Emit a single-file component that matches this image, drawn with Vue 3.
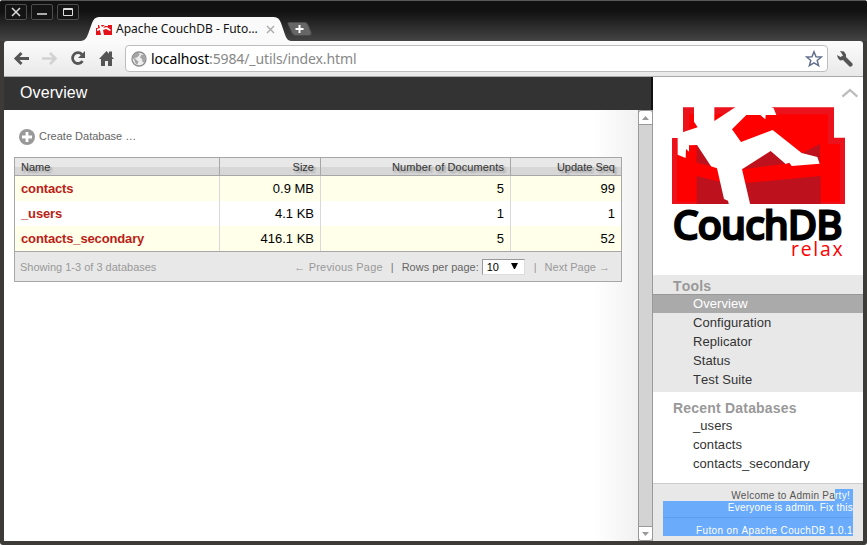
<script setup>
const databases = [
  { name: 'contacts', size: '0.9 MB', docs: 5, seq: 99 },
  { name: '_users', size: '4.1 KB', docs: 1, seq: 1 },
  { name: 'contacts_secondary', size: '416.1 KB', docs: 5, seq: 52 },
]
const tools = ['Overview', 'Configuration', 'Replicator', 'Status', 'Test Suite']
const recent = ['_users', 'contacts', 'contacts_secondary']
</script>

<template>
  <div class="window">
    <header class="titlebar">
      <div class="controls">
        <span class="control"><svg width="20" height="14"><path d="M6 3l8 8M14 3l-8 8" stroke="#ddd" stroke-width="1.5" /></svg></span>
        <span class="control"><svg width="20" height="14"><path d="M5 9h10" stroke="#ddd" stroke-width="1.6" /></svg></span>
        <span class="control"><svg width="20" height="14"><path d="M5.5 3.5h9v7h-9zM5 4.500h10" fill="none" stroke="#ddd" /></svg></span>
      </div>
      <div class="tab">
        <svg class="tab-shape" width="210" height="24"><path d="M0 24C6 23 6 20 11 6Q13 0 18 0H193Q198 0 200 6C205 20 205 23 210 24Z" fill="#fafafa" /></svg>
        <svg class="favicon" width="16" height="10"><path d="M0 0h16v10H0z" fill="#e4121a" /><path d="M0 0h2v3H0zM3 0h2l1 2 3-2h3v1H9L7 3l4-1 4 3-1 1-4-2-3 1 1 5H5L4 5 1 6V4l3-1z" fill="#fff" /></svg>
        <span class="tab-title">Apache CouchDB - Futo…</span>
        <svg class="tab-close" width="9" height="9"><path d="M1 1l7 7M8 1L1 8" stroke="#aaa" stroke-width="1.4" /></svg>
      </div>
      <svg class="new-tab" width="26" height="14"><path d="M2 .5H18Q20 .5 21 3L24 10Q25 13.500 22 13.500H9Q6 13.500 5 11L1 2Q.5.5 2 .5Z" fill="#666" stroke="#4c4c4c" /><path d="M8.500 7h8M12.500 3v8" stroke="#fff" stroke-width="2" /></svg>
    </header>

    <nav class="toolbar">
      <svg class="nav-icons" width="110" height="35">
        <path d="M25 17.500H12M17.500 12L12 17.500l5.500 5.500" fill="none" stroke="#555" stroke-width="3" />
        <path d="M38 17.500H51M46 12l5.500 5.500L46 23" fill="none" stroke="#d2d2d2" stroke-width="2.600" />
        <path d="M78 13.500A5.400 5.400 0 1 0 78.500 20" fill="none" stroke="#555" stroke-width="2.800" />
        <path d="M81 10v7h-7z" fill="#555" />
        <path d="M102.500 10l7.500 8h-2v7h-4v-5h-3v5h-4v-7h-2zM105 10.500h3v5h-3z" fill="#555" />
      </svg>
      <div class="omnibox">
        <svg class="globe" width="16" height="16"><circle cx="8" cy="8" r="7" fill="#eee" stroke="#8c8c8c" stroke-width="1.300" /><path d="M2.500 4L6 1.500 9 3 7.500 5 6 6.500 3.500 7l2 2 2 1.500L6 14l-2-2.500L3.500 9 1.500 7zM10 4l3-.5 1.500 4-1 4-2-.5-.5-3-2-1.500z" fill="#a4a4a4" /></svg>
        <span class="url"><b>localhost</b>:5984/_utils/index.html</span>
        <svg class="star" width="18" height="18"><path d="M9 1.700l2 5 5.300.3-4.100 3.400 1.400 5.200L9 12.800l-4.600 2.800 1.400-5.200L1.700 7 7 6.700z" fill="#fff" stroke="#64718d" stroke-width="1.500" /></svg>
      </div>
      <svg class="wrench" width="20" height="20"><path d="M5 2L9 2.500 11 5.500V8l6.500 6.500Q18 16 17 17t-2.500.5L8 11 5 11.500Q2.500 10 2 6l3.500 2L8 6.500z" fill="#555" /></svg>
    </nav>

    <div class="page">
      <main class="main">
        <h1>Overview</h1>
        <div class="viewport">
          <div class="content">
            <div class="create">
              <svg width="16" height="16"><circle cx="8" cy="8" r="8" fill="#999" /><path d="M3 8h10M8 3v10" stroke="#fff" stroke-width="2.800" /></svg>
              <span>Create Database …</span>
            </div>
            <div class="listing">
              <div class="row head"><span>Name</span><span>Size</span><span class="wide">Number of Documents</span><span>Update Seq</span></div>
              <div v-for="db in databases" :key="db.name" class="row">
                <span class="name">{{ db.name }}</span><span>{{ db.size }}</span><span>{{ db.docs }}</span><span>{{ db.seq }}</span>
              </div>
              <div class="foot">
                <span class="showing">Showing 1-3 of 3 databases</span>
                <span class="prev">← Previous Page</span><span class="sep">|</span>
                <span class="rows">Rows per page:</span>
                <span class="select">10<svg width="7" height="7"><path d="M0 0h7L4 6H3z" fill="#000" /></svg></span>
                <span class="sep2">|</span><span>Next Page →</span>
              </div>
            </div>
          </div>
          <div class="scrollbar">
            <span class="arrow up"><svg width="7" height="4"><path d="M0 4L3.500 0 7 4z" fill="#999" /></svg></span>
            <span class="arrow down"><svg width="7" height="4"><path d="M0 0h7L3.500 4z" fill="#999" /></svg></span>
          </div>
        </div>
      </main>

      <aside class="sidebar">
        <svg class="logo" width="210" height="198" viewBox="-6 6 630 594">
          <path d="M562 65l23-20 22 20" fill="none" stroke="#bdbdbd" stroke-width="7" />
          <path d="M84 97H537V188H570V387H51V189H84Z" fill="#ec121b" />
          <path d="M103 118H519V207H555V381H66V207H103Z" fill="#f00" />
          <path d="M125 207L175 275 125 263ZM262 283L347 228 405 265ZM430 240L495 207V266ZM125 303L200 322 222 387H125ZM265 325L497 303V387H275Z" fill="#bd121d" />
          <path d="M117 95V140L128 157 85 171 68 180V239L92 249 93 222 102 230V211L126 210 168 274 186 280 207 372 219 377 222 390H286L261 283 347 228 392 267 403 263 410 273 494 266 487 246 440 234 353 165 258 201 231 163 274 120H316L331 133 332 120H364L356 100 347 95H243L178 138V95Z" fill="#fff" />
          <text class="logo-name" x="55" y="492" textLength="506" lengthAdjust="spacingAndGlyphs">CouchDB</text>
          <text class="logo-relax" x="408" y="543" textLength="155">relax</text>
        </svg>
        <section class="tools">
          <h2>Tools</h2>
          <ul><li v-for="(tool, i) in tools" :key="tool" :class="{ selected: i === 0 }">{{ tool }}</li></ul>
        </section>
        <section class="recent">
          <h2>Recent Databases</h2>
          <ul><li v-for="name in recent" :key="name">{{ name }}</li></ul>
        </section>
        <footer class="footer">
          <p class="welcome">Welcome to Admin Pa<mark>rty!&nbsp;</mark></p>
          <p class="highlight">Everyone is admin. Fix this</p>
          <p class="highlight version">Futon on Apache CouchDB 1.0.1</p>
        </footer>
      </aside>
    </div>
  </div>
</template>

<style>
body { margin: 0; background: #fff; overflow: hidden; }
</style>

<style scoped>
* { box-sizing: border-box; }
svg { display: block; flex: none; }
.window { width: 867px; height: 545px; padding: 0 4px 4px; display: flex; flex-direction: column; background: #3c3b37; border-radius: 3px; font-family: "Liberation Sans", Arial, sans-serif; font-kerning: none; overflow: hidden; white-space: nowrap; }
.titlebar { height: 41px; margin: 0 -4px; padding-left: 5px; display: flex; align-items: flex-start; flex: none; background: linear-gradient(#111 10px, #444 40px, #222 40px); border-top: 1px solid #5a5a5a; }
.controls { display: flex; gap: 4px; padding-top: 3px; width: 76px; }
.control { width: 22px; height: 16px; border: 1px solid #4e4e4e; border-radius: 2px; background: #141414; }
.tab { position: relative; display: flex; align-items: center; width: 210px; height: 24px; margin-top: 16px; padding-left: 15px; }
.tab-shape { position: absolute; left: 0; top: 0; }
.favicon { position: relative; margin-top: 1px; }
.tab-title { position: relative; margin-left: 4px; width: 142px; font: 12px/24px "Noto Sans", sans-serif; color: #111; }
.tab-close { position: relative; margin-left: 8px; margin-top: 1px; }
.new-tab { margin: 21px 0 0 -4px; }
.toolbar { height: 36px; flex: none; display: flex; align-items: center; background: linear-gradient(#fbfbfb, #e9e9e9); border-bottom: 1px solid #aaa; border-radius: 3px 3px 0 0; }
.nav-icons { width: 110px; margin-right: 11px; }
.omnibox { width: 703px; height: 27px; padding: 0 4px 0 5px; display: flex; align-items: center; border: 1px solid #bdbdbd; border-radius: 4px; background: #fff; }
.url { margin-left: 4px; flex: 1; font: 14px/25px "Noto Sans", sans-serif; letter-spacing: -.12px; color: #888; }
.url b { font-weight: 400; color: #000; }
.wrench { margin-left: 7px; }
.page { height: 464px; display: flex; background: #fff; }
.main { width: 649px; display: flex; flex-direction: column; }
h1 { margin: 0; height: 33px; padding-left: 16px; font-size: 16px; line-height: 31px; font-weight: 400; letter-spacing: .1px; color: #fff; background: #333; border-right: 2px solid #111; }
.viewport { flex: 1; display: flex; }
.content { width: 634px; padding: 18px 0 0 10px; background: linear-gradient(to right, #fff 590px, #f1f1f1); }
.create { display: flex; align-items: center; gap: 4px; height: 17px; margin-left: 5px; font-size: 11px; color: #666; }
.create span { padding-bottom: 2px; }
.listing { width: 608px; margin-top: 12px; border: 1px solid #a7a7a7; }
.row { display: grid; grid-template-columns: 204px 101px 190px 111px; height: 25px; font-size: 13px; line-height: 25px; color: #000; background: #fff; }
.row:nth-child(even) { background: #ffffea; }
.row span { padding: 0 6px; text-align: right; border-left: 1px solid #d9d9d9; }
.row span:first-child { text-align: left; border-left: 0; }
.row .name { font-weight: 700; letter-spacing: -.14px; color: #ba1e16; }
.row.head { height: 18px; font-size: 11px; line-height: 19px; color: #333; text-shadow: 2px 2px 2px #999; background: linear-gradient(#e8e8e8 9px, #d7d7d7 9px); border-bottom: 1px solid #a7a7a7; }
.row.head span { border-color: #a7a7a7; }
.row.head .wide { letter-spacing: .1px; }
.foot { display: flex; align-items: center; height: 30px; padding: 0 11px 0 5px; border-top: 1px solid #a7a7a7; background: #e8e8e8; font-size: 11px; color: #999; }
.showing { flex: 1; }
.prev { letter-spacing: .2px; }
.sep { margin: 0 8px; color: #777; }
.sep2 { margin: 0 8px 0 9px; }
.rows { color: #666; }
.select { display: flex; align-items: center; justify-content: space-between; width: 43px; height: 16px; margin-left: 3px; padding: 0 6px 0 4px; border: 1px solid #999; border-right-color: #ddd; border-bottom-color: #ddd; background: #fff; color: #000; }
.scrollbar { width: 15px; display: flex; flex-direction: column; justify-content: space-between; background: #d3d3d3; border: solid #999; border-width: 0 1px; }
.arrow { display: flex; align-items: center; justify-content: center; height: 15px; margin: 0 -1px; background: #fff; border: 1px solid #999; }
.up { border-radius: 3px 3px 0 0; }
.down { border-radius: 0 0 3px 3px; }
.sidebar { width: 210px; display: flex; flex-direction: column; background: #fff; }
.logo-name { font: 400 114px "Open Sans", sans-serif; fill: #000; stroke: #000; stroke-width: 9px; }
.logo-relax { font: 400 58px "Open Sans", sans-serif; fill: #f00; }
h2 { margin: 0; padding-left: 20px; height: 19px; font-size: 14px; line-height: 22px; letter-spacing: .2px; color: #999; }
ul { margin: 0; padding: 0; list-style: none; }
li { height: 19px; padding-left: 40px; font-size: 13px; line-height: 19px; letter-spacing: .07px; color: #333; }
.tools { height: 117px; padding-bottom: 3px; background: #e8e8e8; }
.tools .selected { color: #fff; background: #aaa; border-top: 1px solid #999; line-height: 18px; }
.recent { height: 91px; padding-top: 5px; }
.footer { height: 58px; padding: 5px 10px 0; border-top: 1px solid #ccc; background: #e8e8e8; font-size: 10px; }
.footer p { margin: 0; text-align: right; letter-spacing: .21px; }
.footer .welcome { height: 12px; line-height: 13px; letter-spacing: .26px; color: #555; }
.welcome mark { display: inline-block; height: 12px; color: #fff; background: #6aabfc; }
.highlight { height: 17px; line-height: 13px; color: #fff; background: #6aabfc; border-bottom: 1px solid #609df0; }
.footer .version { height: 18px; line-height: 26px; letter-spacing: .35px; border: 0; }
</style>
